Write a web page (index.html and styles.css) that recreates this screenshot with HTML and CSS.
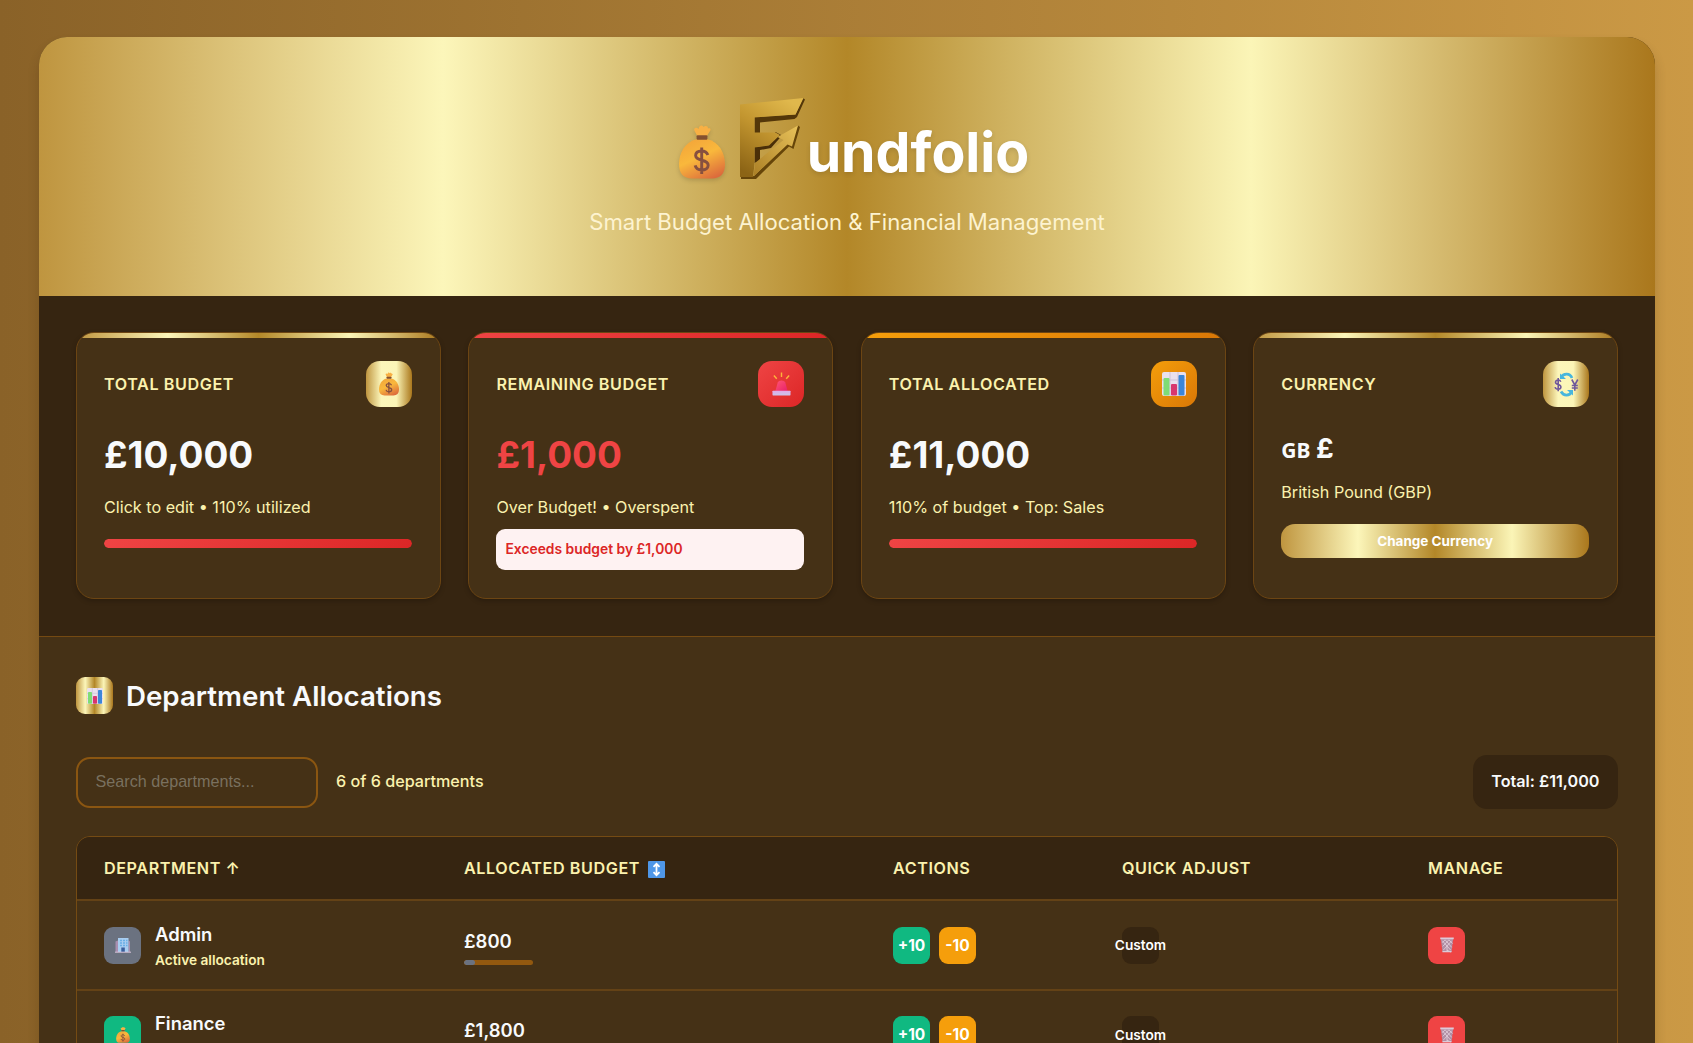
FILE: index.html
```html
<!DOCTYPE html>
<html lang="en">
<head>
<meta charset="utf-8">
<title>Fundfolio</title>
<link rel="stylesheet" href="styles.css">
</head>
<body>
<svg class="defs" aria-hidden="true">
  <defs>
    <linearGradient id="bag-fill" x1="0.2" y1="0" x2="0.75" y2="1"><stop offset="0" stop-color="#f3a53a"/><stop offset="0.45" stop-color="#f9b83c"/><stop offset="1" stop-color="#dc6a3c"/></linearGradient>
    <linearGradient id="logo-face" x1="0.7" y1="0" x2="0.2" y2="1"><stop offset="0" stop-color="#e0b84c"/><stop offset="0.45" stop-color="#c2952f"/><stop offset="1" stop-color="#8c6415"/></linearGradient>
    <linearGradient id="arrow-face" x1="1" y1="0" x2="0" y2="1"><stop offset="0" stop-color="#e8c25a"/><stop offset="1" stop-color="#ab7f25"/></linearGradient>
    <linearGradient id="siren-fill" x1="0" y1="0" x2="1" y2="1"><stop offset="0" stop-color="#ff5573"/><stop offset="1" stop-color="#e8206a"/></linearGradient>
    <linearGradient id="base-fill" x1="0" y1="0" x2="0" y2="1"><stop offset="0" stop-color="#e2a8e6"/><stop offset="1" stop-color="#c9c4ea"/></linearGradient>
    <symbol id="bag" viewBox="0 0 47 55">
      <path d="M19 12 15.500 5c0-2.500 2.500-3 4.500-1 .5-3.500 3.500-5 5-2 2-2 5-1 4.500 1.500 3-1 3.500 1.500 1.500 3.500L28 12Z" fill="#f8b044"/>
      <path d="M18 14.500C6 17 0 29 0 40c0 10 5 14.500 13 14.500h21c8 0 13-4.500 13-14.500 0-11-6-23-18-25.500Z" fill="url(#bag-fill)"/>
      <rect x="18" y="10.500" width="11" height="4.500" rx="1" fill="#84502f"/>
      <path d="M29.500 30.500c-1.200-3-3.500-4-6.300-4-3.700 0-6.200 1.700-6.200 4.700 0 6.500 12.800 3 12.800 9.800 0 3-2.800 4.900-6.600 4.900-3.400 0-5.900-1.600-6.700-4.700M23.200 23v27" fill="none" stroke="#87503f" stroke-width="3"/>
    </symbol>
    <symbol id="chart" viewBox="0 0 24 24">
      <rect width="24" height="24" rx="2" fill="#e9e0ee"/>
      <path d="M0 8h24M0 16h24M8 0v24M16 0v24" stroke="#cfc2d8" stroke-width="1"/>
      <rect x="1.500" y="6" width="6" height="17.500" rx="1" fill="#7fdc74"/>
      <rect x="9" y="12" width="6" height="11.500" rx="1" fill="#d8376f"/>
      <rect x="16.500" y="3" width="6" height="20.500" rx="1" fill="#3c86d8"/>
    </symbol>
    <symbol id="siren" viewBox="0 0 20 25">
      <path d="M2 3.500 5 7M10 0.500v4.500M18 3.500 15 7" stroke="#fdb43a" stroke-width="1.500" fill="none"/>
      <path d="M3.500 20 6 11c.9-3 7-3 8 0l2.500 9Z" fill="url(#siren-fill)"/>
      <rect x="0.500" y="19.500" width="19" height="5" rx="0.600" fill="url(#base-fill)"/>
    </symbol>
    <symbol id="exchange" viewBox="0 0 24 25">
      <path d="M6.500 5.500C9 .8 15.500.8 17.500 6M17.500 19.500c-2.500 4.700-8.500 4.700-11 0" fill="none" stroke="#48b6dd" stroke-width="2.700"/>
      <path d="M5.500 1.500v5.500h6ZM18.500 23.500V18h-6Z" fill="#48b6dd"/>
      <path d="M6.300 9.800C5.800 8.400 4.800 8 3.700 8 2.200 8 1 8.800 1 10.200c0 3.100 5.400 1.600 5.400 4.800 0 1.400-1.200 2.200-2.800 2.200-1.500 0-2.600-.7-3-2.100M3.700 6v13.200" fill="none" stroke="#70589b" stroke-width="1.600"/>
      <path d="M17.300 7.500 20.300 13l3-5.500M20.300 13v5.700M17.300 13.500h6M17.300 16h6" fill="none" stroke="#70589b" stroke-width="1.600"/>
    </symbol>
    <symbol id="office" viewBox="0 0 16 16">
      <path d="M.5 4.500 3 3.500V15H.5ZM13.500 3.500l1.500 1V15h-1.500Z" fill="#a98fb0"/>
      <rect x="3" y="1" width="10.500" height="14" fill="#a9cdf0"/>
      <path d="M5 3.500h2M8 3.500h2M5 6h2M8 6h2M5 8.500h2M8 8.500h2M11 3.500h1.500M11 6h1.500M11 8.500h1.500" stroke="#68aee6" stroke-width="1.500"/>
      <rect x="6.300" y="10.500" width="3.500" height="4.500" fill="#3a5f9c"/>
      <path d="M0 15.200h16" stroke="#d8c4da" stroke-width="1"/>
    </symbol>
    <symbol id="trash" viewBox="0 0 16 17">
      <path d="M1.500 2 3.200 16h9.600L14.500 2Z" fill="#b08ea3"/>
      <path d="m3 4 9 10M6 3l7 8M10 3l4 4M13 4 4 14M10 3l-6.500 7M6 3 3 6M8 14l4 2M8 10v6" stroke="#e2cfdc" stroke-width=".9"/>
      <path d="M.8 1.500h14.400" stroke="#ddc9d8" stroke-width="2"/>
      <path d="M3.200 15.600h9.600" stroke="#ddc9d8" stroke-width="1.400"/>
    </symbol>
  </defs>
</svg>

<div class="container">
  <header class="header">
    <h1 class="brand">
      <svg class="brand-bag"><use href="#bag"/></svg>
      <svg class="brand-mark" viewBox="0 0 65 82" aria-label="F">
        <path d="M63 0 65 1.500 57 19 54.500 21 20 24.500V35h-5.500V19L55.500 16.500Z" fill="#543709"/>
        <path d="M35.500 34 42 37.500 31 50 20 52v11l-5.500 2V49L29 47Z" fill="#4a2f08"/>
        <path d="M58 27.500 60 29 53.500 51 49 48.500 16 81H1v-2.500l13-.5 35-34Z" fill="#664509"/>
        <path d="M0 6.500 63.500 0 55.500 16.500 14.500 19.500V34.500h21L40 37l-11 10.500-14.500 2V66L13 79H0Z" fill="url(#logo-face)"/>
        <path d="M13.500 78.500 15 65 43.500 42 37.500 39 58 27.500 52 48.500 47.500 46.500Z" fill="url(#arrow-face)"/>
      </svg>
      <span class="brand-name">undfolio</span>
    </h1>
    <p class="tagline">Smart Budget Allocation &amp; Financial Management</p>
  </header>

  <section class="stats">
    <article class="card gold">
      <div class="card-head"><h3>Total Budget</h3><span class="card-icon"><svg class="i-bag"><use href="#bag"/></svg></span></div>
      <div class="value">£10,000</div>
      <p class="note">Click to edit • 110% utilized</p>
      <div class="progress"><div class="progress-fill" style="width:100%"></div></div>
    </article>
    <article class="card danger">
      <div class="card-head"><h3>Remaining Budget</h3><span class="card-icon"><svg class="i-siren"><use href="#siren"/></svg></span></div>
      <div class="value">£1,000</div>
      <p class="note">Over Budget! • Overspent</p>
      <div class="alert">Exceeds budget by £1,000</div>
    </article>
    <article class="card warning">
      <div class="card-head"><h3>Total Allocated</h3><span class="card-icon"><svg class="i-chart"><use href="#chart"/></svg></span></div>
      <div class="value">£11,000</div>
      <p class="note">110% of budget • Top: Sales</p>
      <div class="progress"><div class="progress-fill" style="width:100%"></div></div>
    </article>
    <article class="card gold">
      <div class="card-head"><h3>Currency</h3><span class="card-icon"><svg class="i-exchange"><use href="#exchange"/></svg></span></div>
      <div class="value currency"><span class="flag">GB</span> £</div>
      <p class="note">British Pound (GBP)</p>
      <button class="change">Change Currency</button>
    </article>
  </section>

  <main class="departments">
    <h2 class="section-title"><span class="section-icon"><svg><use href="#chart"/></svg></span><span class="section-label">Department Allocations</span></h2>
    <div class="toolbar">
      <input class="search" type="text" placeholder="Search departments...">
      <span class="count">6 of 6 departments</span>
      <span class="total">Total: £11,000</span>
    </div>
    <div class="table">
      <div class="row head">
        <div>Department ↑</div>
        <div class="sortable">Allocated Budget <svg class="sort" viewBox="0 0 17 17"><rect width="17" height="17" rx="1" fill="#4f97e8"/><path d="M8.500 3v11M5.500 5.800l3-3 3 3M5.500 11.200l3 3 3-3" fill="none" stroke="#fff" stroke-width="1.800"/></svg></div>
        <div>Actions</div><div>Quick Adjust</div><div>Manage</div>
      </div>
      <div class="row">
        <div class="dept"><span class="tile slate"><svg><use href="#office"/></svg></span><div><div class="name">Admin</div><div class="status">Active allocation</div></div></div>
        <div><div class="amount">£800</div><div class="meter"><div class="meter-fill slate" style="width:16%"></div></div></div>
        <div class="actions"><button class="tile green">+10</button><button class="tile amber">-10</button></div>
        <div><button class="tile custom">Custom</button></div>
        <div><button class="tile red"><svg><use href="#trash"/></svg></button></div>
      </div>
      <div class="row">
        <div class="dept"><span class="tile green"><svg><use href="#bag"/></svg></span><div><div class="name">Finance</div><div class="status">Active allocation</div></div></div>
        <div><div class="amount">£1,800</div><div class="meter"><div class="meter-fill green" style="width:36%"></div></div></div>
        <div class="actions"><button class="tile green">+10</button><button class="tile amber">-10</button></div>
        <div><button class="tile custom">Custom</button></div>
        <div><button class="tile red"><svg><use href="#trash"/></svg></button></div>
      </div>
    </div>
  </main>
</div>
</body>
</html>
```

FILE: styles.css
```css
:root {
  --gold: linear-gradient(to right, #bf953f, #fcf6ba, #b38728, #fbf5b7, #aa771c);
  --gold-soft: linear-gradient(to right, #bf953f, #fcf6ba 33%, #fbf5b7 66%, #aa771c);
  --dark: #362511;
  --panel: #453116;
  --line: #6c4513;
  --cream: #fbf2ae;
  --white: #f8fafc;
}
* { box-sizing: border-box; margin: 0; padding: 0; }
html { overflow: hidden; }
body {
  height: 1043px;
  overflow: hidden;
  padding: 37px 38px 0 39px;
  background: linear-gradient(to right, #8a6228, #cb9945);
  font-family: Inter, "Liberation Sans", sans-serif;
  color: var(--white);
  line-height: 1.6;
}
.defs { position: absolute; width: 0; height: 0; }
.container {
  height: 1006px;
  border-radius: 28px 28px 0 0;
  overflow: hidden;
  background: var(--panel);
  box-shadow: 0 8px 12px rgba(50, 30, 0, .2);
}
button { border: 0; font-family: inherit; }

.header { height: 258.5px; padding-top: 55px; background: var(--gold); text-align: center; }
.brand { display: flex; justify-content: center; align-items: flex-start; height: 111px; padding-left: 14px; }
.brand-bag { width: 46px; height: 56px; margin: 32px 15px 0 0; filter: drop-shadow(0 2px 2px rgba(0, 0, 0, .15)); }
.brand-mark { width: 65px; height: 82px; margin: 6px 2px 0 0; }
.brand-name { margin-top: 27px; font-size: 55.4px; line-height: 66px; font-weight: 700; color: #fff; text-shadow: 0 2px 5px rgba(0, 0, 0, .12); }
.tagline { padding-top: 1px; font-size: 22.15px; line-height: 37px; color: #fdf3d0; }

.stats {
  display: grid;
  grid-template-columns: repeat(4, 1fr);
  gap: 27.7px;
  height: 341.5px;
  padding: 36.5px 37px 37px;
  background: var(--dark);
  border-bottom: 1px solid #754a12;
}
.card {
  position: relative;
  overflow: hidden;
  height: 267px;
  padding: 28px 28px 0 27px;
  border: 1px solid var(--line);
  border-radius: 18px;
  background: var(--panel);
  box-shadow: 0 2px 5px rgba(0, 0, 0, .22);
}
.card::before { content: ""; position: absolute; inset: 0 0 auto; height: 5px; background: var(--gold); }
.card-head { display: flex; align-items: center; justify-content: space-between; height: 46px; }
.card-head h3 { padding-top: 1px; font-size: 16.16px; font-weight: 600; letter-spacing: .58px; text-transform: uppercase; color: var(--cream); }
.card-icon { display: grid; place-items: center; width: 46px; height: 46px; border-radius: 14px; background: var(--gold-soft); }
.danger::before, .danger .card-icon, .progress-fill { background: linear-gradient(135deg, #ef4444, #dc2626); }
.warning::before, .warning .card-icon { background: linear-gradient(135deg, #f59e0b, #d97706); }
.i-bag { width: 20px; height: 24px; }
.i-siren { width: 19px; height: 24px; }
.i-chart { width: 24px; height: 24px; }
.i-exchange { width: 25px; height: 25px; }
.value { margin-top: 23px; font-size: 36.93px; line-height: 50px; font-weight: 700; }
.danger .value { color: #ef4444; }
.note { margin-top: 14px; font-size: 16.16px; line-height: 26px; color: var(--cream); }
.progress { margin-top: 19px; height: 9px; border-radius: 5px; overflow: hidden; }
.progress-fill { height: 100%; border-radius: 5px; }
.alert { margin-top: 9px; height: 41px; padding: 0 9px; border-radius: 9px; background: #fef2f2; color: #dc2626; font-size: 13.85px; line-height: 41px; font-weight: 600; }
.currency { margin-top: 19px; font-size: 27.7px; line-height: 44px; word-spacing: -1px; }
.currency + .note { margin-top: 7px; }
.flag { font-family: "Noto Sans", "Open Sans", sans-serif; font-size: 21px; }
.change { display: block; width: 100%; height: 34px; margin-top: 19px; border-radius: 14px; background: var(--gold); color: #fff; font-size: 13.5px; font-weight: 700; }

.departments { padding: 40px 37px 0; }
.section-title { display: flex; align-items: center; gap: 13px; height: 37px; font-size: 27.7px; font-weight: 600; }
.section-label { padding-top: 2px; }
.section-icon { display: grid; place-items: center; width: 37px; height: 37px; border-radius: 9px; background: var(--gold); }
.section-icon svg { width: 16px; height: 16px; }
.toolbar { display: flex; align-items: center; height: 54px; margin-top: 41px; }
.search { width: 242px; height: 51px; padding: 0 17.5px 1px; border: 2px solid #8b5611; border-radius: 14px; background: transparent; font: 16.16px "Liberation Sans", sans-serif; }
.search::placeholder { color: #79705f; }
.count { margin-left: 18px; font-size: 16.16px; font-weight: 500; color: var(--cream); }
.total { margin-left: auto; height: 54px; padding: 0 18.5px; border-radius: 14px; background: var(--dark); font-size: 16.16px; line-height: 53px; font-weight: 600; }

.table { margin-top: 27px; border: 1px solid #754b13; border-radius: 14px; overflow: hidden; }
.row { display: grid; grid-template-columns: 360px 429px 229px 306px 1fr; align-items: center; height: 89.6px; padding: 1px 0 0 27px; border-bottom: 2px solid #644216; }
.head { height: 64px; padding-top: 2px; background: var(--dark); font-size: 16.16px; font-weight: 600; letter-spacing: .58px; text-transform: uppercase; color: var(--cream); }
.sortable { display: flex; align-items: center; gap: 8px; }
.sort { width: 17px; height: 17px; }
.dept { display: flex; align-items: center; gap: 14px; }
.name { padding-top: 1px; font-size: 18.46px; line-height: 27px; font-weight: 600; }
.status { font-size: 13.7px; line-height: 22px; margin-top: 1px; font-weight: 600; color: var(--cream); }
.amount { font-size: 18.46px; line-height: 30px; font-weight: 600; }
.meter { width: 69px; height: 5px; margin-top: 4px; border-radius: 3px; overflow: hidden; background: #92580f; }
.meter-fill { height: 100%; border-radius: 3px; }
.tile { display: flex; align-items: center; justify-content: center; flex: none; width: 37px; height: 37px; border-radius: 9px; color: #fff; }
.tile svg { width: 16px; height: 16px; }
.actions { display: flex; gap: 9px; }
.actions .tile { font-size: 15.5px; font-weight: 700; }
.slate { background: #6b7280; }
.green { background: #10b981; }
.amber { background: #f59e0b; }
.red { background: #ef4444; }
.custom { background: var(--dark); font-size: 13.7px; font-weight: 600; }
```
